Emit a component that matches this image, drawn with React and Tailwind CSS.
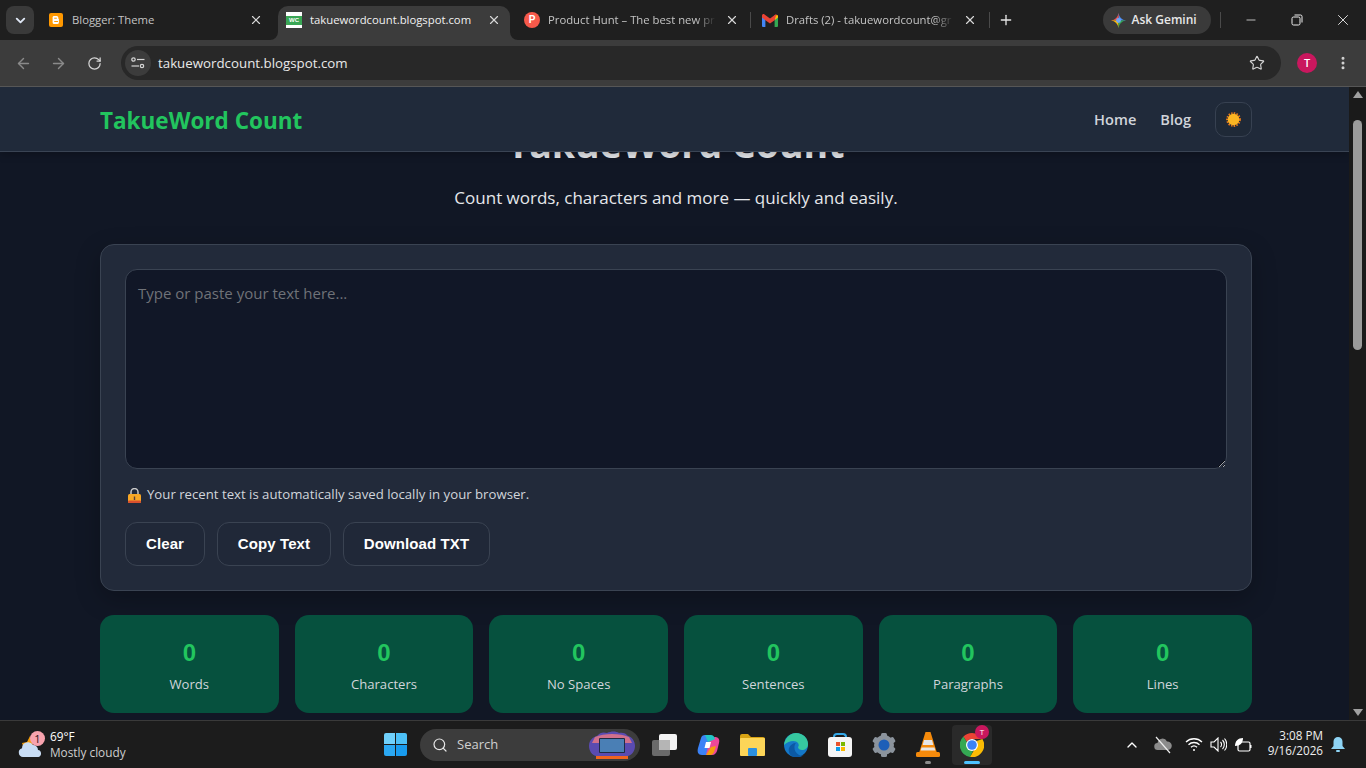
import { ArrowLeft, ArrowRight, ChevronDown, ChevronUp, EllipsisVertical, Minus, Plus, RotateCw, Search, Star, X } from 'lucide-react';

const uiFont = "font-['Open_Sans','Noto_Sans',sans-serif]";

function BloggerIcon() {
  return (
    <svg width="14" height="14" viewBox="0 0 14 14">
      <rect width="14" height="14" rx="2" fill="#ff9800" />
      <path d="M4.500 3h3.200a1.600 1.600 0 0 1 1.600 1.600v1.100h.6v3.700a1.600 1.600 0 0 1-1.600 1.600H5.200a1.600 1.600 0 0 1-1.600-1.600V3.900z" fill="#fff" />
      <rect x="5.200" y="4.700" width="2.600" height="1" fill="#ff9800" />
      <rect x="5.200" y="8" width="3.800" height="1" fill="#ff9800" />
    </svg>
  );
}

function WcIcon() {
  return (
    <div className="w-4 h-4 bg-white flex items-center justify-center">
      <div className="w-4 h-[9px] bg-[#3aa655] text-[6px] leading-[9px] font-bold text-white text-center font-['Liberation_Sans',sans-serif]">WC</div>
    </div>
  );
}

function PhIcon() {
  return (
    <div className="w-4 h-4 rounded-full bg-[#f6594a] text-white text-[10px] leading-4 font-bold text-center font-['Liberation_Sans',sans-serif]">P</div>
  );
}

function GmailIcon() {
  return (
    <svg width="16" height="13" viewBox="0 0 16 13">
      <path d="M0 2v10a1 1 0 0 0 1 1h2.400V5.200z" fill="#4285f4" />
      <path d="M16 2v10a1 1 0 0 1-1 1h-2.400V5.200z" fill="#34a853" />
      <path d="M12.600 1 16 1.200V3.600l-3.400 2.600z" fill="#fbbc04" />
      <path d="M0 1.600C0 .3 1.500-.4 2.500.4L8 4.600 13.500.4c.4-.3.8-.4 1-.4L12.600 6.200 8 9.600 3.400 6.200 0 3.600z" fill="#ea4335" />
    </svg>
  );
}

const tabs = [
  { title: 'Blogger: Theme', icon: <BloggerIcon /> },
  { title: 'takuewordcount.blogspot.com', icon: <WcIcon />, active: true },
  { title: 'Product Hunt – The best new pr', icon: <PhIcon />, fade: true, sep: true },
  { title: 'Drafts (2) - takuewordcount@gr', icon: <GmailIcon />, fade: true },
];

function Tab({ tab }) {
  return (
    <div className={`relative w-[232px] h-[34px] shrink-0 flex items-center pl-2 pr-[9px] pb-[6px] rounded-t-[10px] ${tab.active ? 'bg-[#3c3c3c] text-[#f1f1f1]' : 'text-[#c4c4c4]'}`}>
      {tab.active && (
        <>
          <svg width="8" height="8" viewBox="0 0 8 8" className="absolute -left-2 bottom-0"><path d="M8 0v8H0a8 8 0 0 0 8-8z" fill="#3c3c3c" /></svg>
          <svg width="8" height="8" viewBox="0 0 8 8" className="absolute -right-2 bottom-0"><path d="M0 0v8h8a8 8 0 0 1-8-8z" fill="#3c3c3c" /></svg>
        </>
      )}
      <div className="w-4 flex justify-center shrink-0">{tab.icon}</div>
      <div className={`ml-2 flex-1 min-w-0 whitespace-nowrap text-[11.300px] ${tab.fade ? 'mr-[9px] [mask-image:linear-gradient(to_right,black_88%,transparent)]' : ''}`}>{tab.title}</div>
      <X size={14} strokeWidth={2} className="shrink-0 text-[#d8d8d8]" />
      {tab.sep && <div className="absolute -right-[3px] top-[6px] w-px h-4 bg-[#4a4a4a]" />}
    </div>
  );
}

function GeminiIcon() {
  return (
    <svg width="15" height="15" viewBox="0 0 15 15">
      <path d="M7.500 0Q8.500 6.500 15 7.500H7.500z" fill="#4a8cf5" />
      <path d="M0 7.500Q6.500 6.500 7.500 0V7.500z" fill="#ef5350" />
      <path d="M0 7.500Q6.500 8.500 7.500 15V7.500z" fill="#fbbc04" />
      <path d="M15 7.500Q8.500 8.500 7.500 15V7.500z" fill="#34a853" />
      <circle cx="7.500" cy="7.500" r="2.400" fill="#6fa8f7" />
    </svg>
  );
}

function TabStrip() {
  return (
    <div className="h-10 shrink-0 bg-[#1f1f1f] flex items-end relative">
      <div className="absolute left-[6px] top-[6px] w-7 h-7 rounded-lg bg-[#3a3a3a] flex items-center justify-center">
        <ChevronDown size={15} strokeWidth={3} className="text-[#dfe7f5]" />
      </div>
      <div className="ml-10 flex gap-[6px]">
        {tabs.map((t) => <Tab key={t.title} tab={t} />)}
      </div>
      <div className="h-full flex items-center ml-[3px]">
        <div className="w-px h-4 bg-[#4a4a4a]" />
        <Plus size={16} strokeWidth={2} className="ml-[8px] text-[#e6e6e6]" />
      </div>
      <div className="ml-auto h-full flex items-center">
        <div className="w-[108px] h-7 rounded-[14px] bg-[#3a3a3a] flex items-center pl-2 gap-[6px] text-[12px] font-semibold text-[#e8e8e8]">
          <GeminiIcon />
          <span>Ask Gemini</span>
        </div>
        <div className="w-px h-4 bg-[#4a4a4a] ml-[9px]" />
        <div className="w-[46px] ml-[7.500px] flex justify-center"><Minus size={14} strokeWidth={1.300} className="text-[#eee]" /></div>
        <div className="w-[46px] flex justify-center">
          <svg width="12" height="12" viewBox="0 0 12 12" fill="none" stroke="#eee" strokeWidth="1">
            <rect x="1" y="3" width="8" height="8" rx="1.500" />
            <path d="M3.500 1H9.500A1.500 1.500 0 0 1 11 2.500V8.500" />
          </svg>
        </div>
        <div className="w-[46px] flex justify-center"><X size={18} strokeWidth={1.100} className="text-white" /></div>
      </div>
    </div>
  );
}

function SiteSettingsIcon() {
  return (
    <svg width="14" height="12" viewBox="0 0 14 12" fill="none" stroke="#d5d5d5" strokeWidth="1.200">
      <circle cx="2.500" cy="2.500" r="1.700" />
      <path d="M6 2.500h7.500" />
      <circle cx="11" cy="9" r="1.700" />
      <path d="M0.500 9h7.500" />
    </svg>
  );
}

function Toolbar() {
  return (
    <div className="h-[47px] shrink-0 bg-[#3c3c3c] border-b border-[#565656] flex items-start pt-[6px]">
      <div className="w-[121px] h-[34px] flex items-center text-[#8a8a8a]">
        <ArrowLeft size={17} className="ml-[15px]" />
        <ArrowRight size={17} className="ml-[18px]" />
        <RotateCw size={15} className="ml-[20px] text-[#d5d5d5]" />
      </div>
      <div className="w-[1160px] h-[34px] rounded-[17px] bg-[#282828] flex items-center pl-[4px] pr-[16px]">
        <div className="w-[26px] h-[26px] rounded-full bg-[#3c3c3c] flex items-center justify-center"><SiteSettingsIcon /></div>
        <span className="ml-[7px] mt-[1px] text-[13.300px] text-[#e8e8e8]">takuewordcount.blogspot.com</span>
        <Star size={16} strokeWidth={1.700} className="ml-auto text-[#d5d5d5]" />
      </div>
      <div className="w-5 h-5 ml-4 mt-[7px] rounded-full bg-[#c9175e] text-white text-[11px] leading-5 text-center font-semibold">T</div>
      <EllipsisVertical size={16} strokeWidth={2.500} className="ml-[18px] mt-[9px] text-[#d5d5d5]" />
    </div>
  );
}

function SunEmoji() {
  return (
    <svg width="15" height="15" viewBox="0 0 15 15">
      <circle cx="7.500" cy="7.500" r="6.400" fill="none" stroke="#e8791a" strokeWidth="2" strokeDasharray="1.500 1.200" />
      <circle cx="7.500" cy="7.500" r="5.800" fill="#fbb522" />
    </svg>
  );
}

function LockEmoji() {
  return (
    <svg width="13" height="15" viewBox="0 0 13 15" className="shrink-0">
      <path d="M3 7V4a3.500 3.500 0 0 1 7 0v3" fill="none" stroke="#c9c9c9" strokeWidth="1.500" />
      <rect y="6" width="13" height="9" rx="1.500" fill="#f9a825" />
      <rect y="12.500" width="13" height="2.500" rx="1" fill="#d9502e" />
      <rect x="5.800" y="8.500" width="1.400" height="3.500" fill="#5d4037" />
    </svg>
  );
}

function SiteNav() {
  return (
    <nav className="h-[65px] shrink-0 relative z-10 bg-[#202a3a] border-b border-[#3a4454] shadow-[0_2px_8px_rgba(0,0,0,0.25)] pl-[100px]">
      <div className="w-[1152px] h-full flex items-center">
        <span className="mt-[4px] text-[22.500px] font-bold text-[#22c55e]">TakueWord Count</span>
        <div className="ml-auto flex items-center gap-6 text-[14.600px] font-semibold text-[#d1d5db]">
          <span className="mt-[1px]">Home</span>
          <span className="mt-[1px]">Blog</span>
          <button className="w-[37px] h-[35px] rounded-[10px] border border-[#374151] bg-[#1f2937] flex items-center justify-center"><SunEmoji /></button>
        </div>
      </div>
    </nav>
  );
}

function ActionButton({ children, width }) {
  return (
    <button className={`${width} h-11 rounded-[12px] border border-[#3a4352] bg-[#202838] text-[15px] font-bold text-white font-['Liberation_Sans',sans-serif] tracking-[0.1px]`}>
      {children}
    </button>
  );
}

const stats = ['Words', 'Characters', 'No Spaces', 'Sentences', 'Paragraphs', 'Lines'];

function WordCounter() {
  return (
    <div className="flex-1 min-w-0 bg-[#111725] flex flex-col overflow-hidden">
      <SiteNav />
      <main className="flex-1 w-[1152px] ml-[100px]">
        <div className="-mt-[30px] text-center">
          <h1 className="text-[37.500px] leading-[44px] font-bold text-[#e5e7eb]">TakueWord Count</h1>
          <p className="mt-[19px] text-[17px] leading-[26px] text-[#e5e7eb]">Count words, characters and more — quickly and easily.</p>
        </div>
        <section className="mt-[33px] h-[347px] rounded-[14px] border border-[#3a4352] bg-[#222a3a] shadow-[0_8px_24px_rgba(0,0,0,0.25)] p-6">
          <textarea
            placeholder="Type or paste your text here..."
            className="block w-full h-[200px] rounded-[12px] border border-[#3a4352] bg-[#111727] px-3 py-3 text-[15px] outline-none placeholder:text-[#6f7278]"
          />
          <div className="mt-[16px] flex items-center gap-[6px] pl-[3px] h-5 text-[13.200px] text-[#d1d5db]">
            <LockEmoji />
            <span>Your recent text is automatically saved locally in your browser.</span>
          </div>
          <div className="mt-[17px] flex gap-3">
            <ActionButton width="w-[80px]">Clear</ActionButton>
            <ActionButton width="w-[114px]">Copy Text</ActionButton>
            <ActionButton width="w-[147px]">Download TXT</ActionButton>
          </div>
        </section>
        <section className="mt-6 grid grid-cols-6 gap-4">
          {stats.map((s) => (
            <div key={s} className="h-[98px] rounded-[14px] bg-[#06513e] flex flex-col items-center pt-[23px]">
              <div className="text-[24px] leading-[30px] font-bold text-[#22c55e] font-['Liberation_Sans',sans-serif]">0</div>
              <div className="mt-[6px] text-[13.100px] leading-5 text-[#d1d5db]">{s}</div>
            </div>
          ))}
        </section>
      </main>
    </div>
  );
}

function Scrollbar() {
  return (
    <div className="w-[17px] shrink-0 bg-[#1a1a1a] flex flex-col items-center relative">
      <div className="mt-[4px] w-0 h-0 border-x-[5px] border-x-transparent border-b-[7px] border-b-[#a0a0a0]" />
      <div className="mt-[22px] w-[9px] h-[230px] rounded-[5px] bg-[#9b9b9b]" />
      <div className="mt-auto mb-[4px] w-0 h-0 border-x-[5px] border-x-transparent border-t-[7px] border-t-[#a0a0a0]" />
    </div>
  );
}

function WeatherIcon() {
  return (
    <div className="relative w-[27px] h-[27px]">
      <svg width="25" height="24" viewBox="0 0 25 24" className="absolute left-0 top-[3px]">
        <path d="M4 9 9 8l3-6 3 10H5z" fill="#f59e0b" />
        <path d="M5 23a4.500 4.500 0 0 1-1-8.800A6 6 0 0 1 15 11a5 5 0 0 1 5 5 3.600 3.600 0 0 1 .5 7z" fill="#c9ddf4" />
      </svg>
      <div className="absolute left-[12px] top-0 w-[15px] h-[15px] rounded-full bg-[#f8a3ae] text-[#2a1216] text-[11px] leading-[15px] text-center">1</div>
    </div>
  );
}

function WinLogo() {
  return (
    <div className="grid grid-cols-2 gap-[1px] w-[23px] h-[23px]">
      <div className="bg-[#6fd0fb] rounded-tl-[2px]" />
      <div className="bg-[#4cc0f7] rounded-tr-[2px]" />
      <div className="bg-[#2ba8f2] rounded-bl-[2px]" />
      <div className="bg-[#189bee] rounded-br-[2px]" />
    </div>
  );
}

function TaskView() {
  return (
    <div className="relative w-[25px] h-[22px]">
      <div className="absolute left-0 bottom-0 w-[18px] h-[16px] rounded-[2px] bg-[#6a6a6a]" />
      <div className="absolute right-0 top-0 w-[18px] h-[16px] rounded-[2px] bg-[#f4f4f4]" />
      <div className="absolute left-[7px] top-[6px] w-[11px] h-[10px] bg-[#b5b5b5]" />
    </div>
  );
}

function CopilotIcon() {
  return (
    <svg width="23" height="22" viewBox="0 0 23 22">
      <path d="M8 1h6l-4 20H5C1 21 0 18 1 14L4 4c.5-2 2-3 4-3z" fill="#3b82f6" />
      <path d="M9 21h6c3 0 4-2 5-4l2-8c1-4-1-6-4-6l-5 1z" fill="#ec4899" />
      <path d="M8 1h6c2 0 3 1 4 4l-4 2-3 1z" fill="#22c5c5" />
      <path d="M14 13l5-1-2 6c-1 2-2 3-4 3H9z" fill="#f59e0b" />
      <path d="M9 8h5l-1.500 6H7.500z" fill="#fff" />
    </svg>
  );
}

function ExplorerIcon() {
  return (
    <svg width="25" height="22" viewBox="0 0 25 22">
      <path d="M0 2a2 2 0 0 1 2-2h6l3 3h12a2 2 0 0 1 2 2v3H0z" fill="#d8a313" />
      <rect y="4" width="25" height="18" rx="1" fill="#fcd558" />
      <rect x="8" y="14" width="9" height="8" rx="1" fill="#2b90e0" />
    </svg>
  );
}

function EdgeIcon() {
  return (
    <svg width="24" height="24" viewBox="0 0 24 24">
      <circle cx="12" cy="12" r="12" fill="#1478c8" />
      <path d="M0 12C1 4 7 0 12 0c7 0 12 5 12 11 0 4-3 6-6 6-2 0-4-1-4-3 1-1 1-2 0-4-2-3-9-3-14 2z" fill="#36c8a0" />
      <path d="M10 24c-4-1-6-5-5-9 1-3 4-5 7-5-2 2-3 8 3 12 2 1 3 1 5 0-3 2-6 3-10 2z" fill="#0c59a4" />
    </svg>
  );
}

function StoreIcon() {
  return (
    <div className="relative w-6 h-6">
      <div className="absolute left-[5px] top-0 w-[14px] h-[8px] rounded-t-[4px] border-2 border-b-0 border-[#34a8e8]" />
      <div className="absolute left-0 top-[4px] w-6 h-5 rounded-[3px] bg-[#f5f5f5] flex items-center justify-center">
        <div className="grid grid-cols-2 gap-[1px] w-[9px] h-[9px]">
          <div className="bg-[#e8532b]" />
          <div className="bg-[#7ab800]" />
          <div className="bg-[#0a9be8]" />
          <div className="bg-[#fbb900]" />
        </div>
      </div>
    </div>
  );
}

function SettingsIcon() {
  return (
    <svg width="24" height="24" viewBox="0 0 24 24">
      <g fill="#8b939c">
        <circle cx="12" cy="12" r="10" />
        <rect x="9" y="0" width="6" height="24" rx="1.500" />
        <rect x="9" y="0" width="6" height="24" rx="1.500" transform="rotate(60 12 12)" />
        <rect x="9" y="0" width="6" height="24" rx="1.500" transform="rotate(120 12 12)" />
      </g>
      <circle cx="12" cy="12" r="5.500" fill="#1d5fb8" />
    </svg>
  );
}

function VlcIcon() {
  return (
    <svg width="24" height="26" viewBox="0 0 24 26">
      <path d="M9.500 0h5L21 21H3z" fill="#f58a0b" />
      <path d="M8 8h8l1.300 5H6.700zM5.500 15.500h13l.8 3H4.700z" fill="#e6e6e6" />
      <rect x="0" y="20" width="24" height="5" rx="1.500" fill="#f58a0b" />
    </svg>
  );
}

function ChromeIcon() {
  return (
    <svg width="24" height="24" viewBox="0 0 24 24">
      <path d="M12 0a12 12 0 0 1 10.400 6H12a6 6 0 0 0-5.200 3L3.400 3.600A12 12 0 0 1 12 0z" fill="#ea4335" />
      <path d="M3.400 3.600 8.600 12a6 6 0 0 0 4.400 5.900L10 24A12 12 0 0 1 3.400 3.600z" fill="#34a853" />
      <path d="M22.400 6A12 12 0 0 1 10 24l5-8.500A6 6 0 0 0 16.500 8z" fill="#fbbc04" />
      <circle cx="12" cy="12" r="6" fill="#fff" />
      <circle cx="12" cy="12" r="4.800" fill="#3b82f6" />
    </svg>
  );
}

function SearchThumb() {
  return (
    <svg width="48" height="30" viewBox="0 0 48 30" className="ml-auto mr-[4px]">
      <path d="M1 16C1 10 5 7 9 6c3-4 7-4 10-3 4-2 9-2 12 0 3-1 7 0 9 3 4 1 7 5 7 10s-3 9-7 10H8c-4-1-7-5-7-10z" fill="#5a4bb0" />
      <path d="M7 7c9-4 25-4 34 0l3 6H4z" fill="#d0708c" />
      <rect x="11" y="8" width="26" height="15" rx="1" fill="#1f2b44" />
      <rect x="12" y="9" width="24" height="13" fill="#4a7fb5" />
      <rect x="8" y="26" width="32" height="3" fill="#f0641e" />
    </svg>
  );
}

function Taskbar() {
  return (
    <footer className="h-12 shrink-0 bg-[#1c1c1c] border-t border-[#3a3a3a] flex items-center relative">
      <div className="w-[384px] shrink-0 flex items-center pl-[18px]">
        <WeatherIcon />
        <div className="ml-[5px] -mt-[2px] text-[11.800px] leading-[16px] text-[#e6e6e6]">
          <div className="text-white">69°F</div>
          <div className="text-[#cfcfcf]">Mostly cloudy</div>
        </div>
      </div>
      <WinLogo />
      <div className="ml-[13px] w-[220px] h-8 rounded-2xl bg-[#3c3c3c] flex items-center pl-3 text-[13px] text-[#d0d0d0]">
        <Search size={16} strokeWidth={1.800} className="text-[#e6e6e6]" />
        <span className="ml-[9px]">Search</span>
        <SearchThumb />
      </div>
      <div className="ml-[2px] flex items-center">
        <div className="w-[44px] flex justify-center"><TaskView /></div>
        <div className="w-[44px] flex justify-center"><CopilotIcon /></div>
        <div className="w-[44px] flex justify-center"><ExplorerIcon /></div>
        <div className="w-[44px] flex justify-center"><EdgeIcon /></div>
        <div className="w-[44px] flex justify-center"><StoreIcon /></div>
        <div className="w-[44px] flex justify-center"><SettingsIcon /></div>
        <div className="w-[44px] flex justify-center relative">
          <VlcIcon />
          <div className="absolute left-[19px] -bottom-[6px] w-[6px] h-[3px] rounded-full bg-[#8c8c8c]" />
        </div>
        <div className="w-[40px] h-[40px] ml-[2px] rounded-[4px] bg-[#2a2a2a] flex items-center justify-center relative">
          <ChromeIcon />
          <div className="absolute right-[3px] top-0 w-[14px] h-[14px] rounded-full bg-[#c9175e] text-white text-[8px] leading-[14px] text-center">T</div>
          <div className="absolute left-[12px] bottom-[1px] w-4 h-[3px] rounded-full bg-[#4cc2ff]" />
        </div>
      </div>
      <div className="ml-auto flex items-center text-white">
        <ChevronUp size={16} strokeWidth={2} />
        <svg width="20" height="18" viewBox="0 0 20 18" className="ml-[13px]">
          <path d="M5 14a3.500 3.500 0 0 1-.5-7A5 5 0 0 1 14 5.500a4.200 4.200 0 0 1 1 8.500z" fill="#8c8c8c" />
          <path d="M3 1 17 17" stroke="#eee" strokeWidth="1.200" />
        </svg>
        <svg width="18" height="15" viewBox="0 0 18 15" fill="none" stroke="#fff" strokeWidth="1.300" className="ml-[12px]">
          <path d="M1 5a11.500 11.500 0 0 1 16 0M3.500 7.700a8 8 0 0 1 11 0M6 10.300a4.400 4.400 0 0 1 6 0" />
          <circle cx="9" cy="13" r="1" fill="#fff" stroke="none" />
        </svg>
        <svg width="17" height="15" viewBox="0 0 17 15" fill="none" stroke="#fff" strokeWidth="1.100" className="ml-[7px]">
          <path d="M1 5h3l4-4v13l-4-4H1zM10.500 5a3.500 3.500 0 0 1 0 5M12.500 3a6.500 6.500 0 0 1 0 9M14.500 1.500a9 9 0 0 1 0 12" />
        </svg>
        <svg width="18" height="16" viewBox="0 0 18 16" className="ml-[7px]">
          <rect x="4" y="5" width="12" height="9" rx="1.500" fill="none" stroke="#fff" strokeWidth="1.200" />
          <rect x="16" y="8" width="1.500" height="3" fill="#fff" />
          <path d="M1 9C1 4 4 1 9 1c0 5-3 8-8 8z" fill="#fff" />
        </svg>
        <div className="w-[71px] -mt-[4px] text-right text-[11.700px] leading-[15px] text-[#eee]">
          <div>3:08 PM</div>
          <div>9/16/2026</div>
        </div>
        <svg width="14" height="15" viewBox="0 0 14 15" className="ml-[8px] mr-[21px]">
          <path d="M7 0a4.500 4.500 0 0 1 4.500 4.500V9L14 12H0l2.500-3V4.500A4.500 4.500 0 0 1 7 0z" fill="#8ed4f5" />
          <rect x="5" y="13" width="4" height="2" rx="1" fill="#8ed4f5" />
        </svg>
      </div>
    </footer>
  );
}

export default function App() {
  return (
    <div className={`w-screen h-screen flex flex-col overflow-hidden bg-[#111725] ${uiFont}`}>
      <TabStrip />
      <Toolbar />
      <div className="flex-1 min-h-0 flex">
        <WordCounter />
        <Scrollbar />
      </div>
      <Taskbar />
    </div>
  );
}
